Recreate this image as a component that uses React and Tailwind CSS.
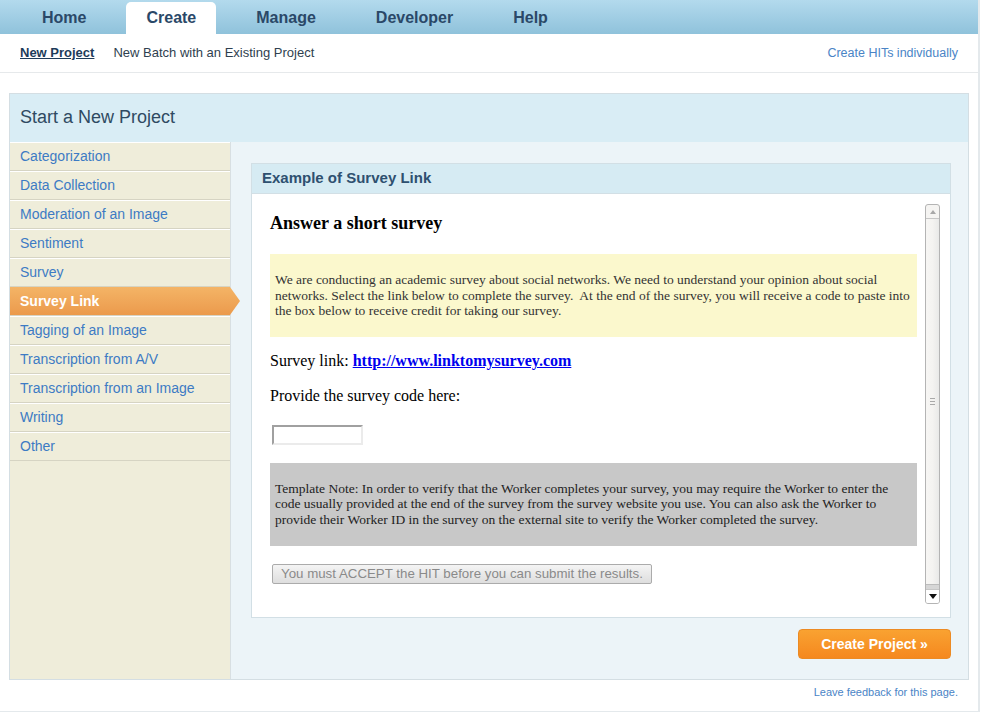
const tabs = ['Home', 'Create', 'Manage', 'Developer', 'Help'];

const categories = [
  'Categorization',
  'Data Collection',
  'Moderation of an Image',
  'Sentiment',
  'Survey',
  'Survey Link',
  'Tagging of an Image',
  'Transcription from A/V',
  'Transcription from an Image',
  'Writing',
  'Other',
];

function TopNav() {
  return (
    <div className="h-[34px] flex items-end pl-[22px] gap-[20px] bg-gradient-to-b from-[#b3daed] to-[#8fc2db]">
      {tabs.map((t) =>
        t === 'Create' ? (
          <div
            key={t}
            className="h-[32px] px-[20px] flex items-center bg-white rounded-t-[5px] text-[16px] font-bold text-[#2a4868]"
          >
            {t}
          </div>
        ) : (
          <div key={t} className="h-[32px] px-[20px] flex items-center text-[16px] font-bold text-[#2a4868]">
            {t}
          </div>
        )
      )}
    </div>
  );
}

function SubNav() {
  return (
    <div className="h-[39px] flex items-center justify-between px-[20px] border-b border-[#e6e9eb]">
      <div className="flex items-center gap-[19px] text-[13px]">
        <span className="font-bold underline text-[#1d3c5a]">New Project</span>
        <span className="text-[#2f3f4f]">New Batch with an Existing Project</span>
      </div>
      <span className="text-[12.5px] text-[#4a84c6]">Create HITs individually</span>
    </div>
  );
}

function Sidebar() {
  return (
    <div className="w-[221px] shrink-0 bg-[#efedda] border-r border-[#d8dfe2] flex flex-col">
      {categories.map((c) =>
        c === 'Survey Link' ? (
          <div key={c} className="relative h-[29px] border-b border-[#d6d4c3]">
            <div className="h-full flex items-center pl-[10px] text-[14px] font-bold text-white bg-gradient-to-b from-[#f4b466] to-[#eb9a4c]">
              {c}
            </div>
            <span className="absolute right-[-10px] top-0 w-[10px] h-[28px] bg-gradient-to-b from-[#f4b466] to-[#eb9a4c] [clip-path:polygon(0_0,100%_50%,0_100%)]" />
          </div>
        ) : (
          <div
            key={c}
            className="h-[29px] flex items-center pl-[10px] text-[14px] text-[#3d7bc4] border-b border-[#d6d4c3] shadow-[inset_0_1px_0_#ffffff]"
          >
            {c}
          </div>
        )
      )}
    </div>
  );
}

function Scrollbar() {
  return (
    <div className="w-[15px] h-[400px] shrink-0 border border-[#b4b4b4] rounded-[3px] flex flex-col bg-[#f5f4f2] overflow-hidden">
      <div className="h-[14px] flex items-center justify-center border-b border-[#c6c6c6]">
        <span className="w-0 h-0 border-l-[3px] border-r-[3px] border-b-[4px] border-l-transparent border-r-transparent border-b-[#a8a8a8]" />
      </div>
      <div className="flex-1 flex items-center justify-center bg-gradient-to-r from-[#f7f6f4] via-[#f4f3f1] to-[#e9e9e8]">
        <div className="flex flex-col gap-[2px]">
          <span className="block w-[5px] h-px bg-[#a9a9a9]" />
          <span className="block w-[5px] h-px bg-[#a9a9a9]" />
          <span className="block w-[5px] h-px bg-[#a9a9a9]" />
        </div>
      </div>
      <div className="h-[5px] bg-[#d6d6d6] border-t border-[#bcbcbc]" />
      <div className="h-[14px] flex items-center justify-center border-t border-[#c6c6c6] bg-white">
        <span className="w-0 h-0 border-l-[4px] border-r-[4px] border-t-[5px] border-l-transparent border-r-transparent border-t-[#111111]" />
      </div>
    </div>
  );
}

function SurveyFrame() {
  return (
    <div className="h-[400px] flex">
      <div className="w-[663px] h-[400px] overflow-hidden p-[8px] font-['Liberation_Serif',serif] text-black">
        <h3 className="mt-[1px] text-[18px] leading-[21px] font-bold mb-[20px]">Answer a short survey</h3>
        <div className="bg-[#fbf8cd] py-[18px] px-[5px] text-[13.5px] leading-[15.6px] text-[#333333] whitespace-nowrap">
          We are conducting an academic survey about social networks. We need to understand your opinion about social
          <br />
          networks. Select the link below to complete the survey.&nbsp; At the end of the survey, you will receive a code
          to paste into
          <br />
          the box below to receive credit for taking our survey.
        </div>
        <p className="mt-[15px] text-[16px] leading-[18px]">
          Survey link:{' '}
          <a className="font-bold underline text-[#0000ee]" href="#">
            http://www.linktomysurvey.com
          </a>
        </p>
        <p className="mt-[17px] text-[16px] leading-[18px]">Provide the survey code here:</p>
        <div className="mt-[20px] ml-[2px] w-[91px] h-[20px] border-2 border-t-[#a0a0a0] border-l-[#a0a0a0] border-b-[#ebebeb] border-r-[#ebebeb] bg-white" />
        <div className="mt-[18px] bg-[#c8c8c8] py-[18px] px-[5px] text-[13.5px] leading-[15.6px] text-[#222222] whitespace-nowrap">
          Template Note: In order to verify that the Worker completes your survey, you may require the Worker to enter
          the
          <br />
          code usually provided at the end of the survey from the survey website you use. You can also ask the Worker
          to
          <br />
          provide their Worker ID in the survey on the external site to verify the Worker completed the survey.
        </div>
        <div className="mt-[18px] ml-[2px] inline-flex h-[20px] items-center px-[8px] border border-[#ababab] rounded-[2px] bg-gradient-to-b from-[#f4f4f4] to-[#dedede] text-[13.3px] text-[#8a8a8a] font-['Liberation_Sans',sans-serif]">
          You must ACCEPT the HIT before you can submit the results.
        </div>
      </div>
      <Scrollbar />
    </div>
  );
}

export default function App() {
  return (
    <div className="w-[983px] h-[713px] bg-white font-['Liberation_Sans',Arial,sans-serif] overflow-hidden">
      <div className="w-[980px] h-[712px] border-r-2 border-b border-[#e4e9ec] flex flex-col">
        <TopNav />
        <SubNav />
        <div className="mt-[20px] mx-[9px] border border-[#d4dee3] flex flex-col">
          <div className="h-[48px] flex items-center pl-[10px] pb-[2px] bg-[#d9edf5] text-[18px] text-[#2f4a62]">
            Start a New Project
          </div>
          <div className="h-[537px] flex">
            <Sidebar />
            <div className="flex-1 bg-[#ecf4f8] pt-[21px] pl-[20px] pr-[17px] flex flex-col">
              <div className="border border-[#d2dfe5] bg-white flex flex-col">
                <div className="h-[30px] flex items-center pl-[10px] bg-[#d6ebf3] border-b border-[#d2dfe5] text-[15px] font-bold text-[#2e5070]">
                  Example of Survey Link
                </div>
                <div className="pt-[10px] pl-[10px] pr-[9px] pb-[13px]">
                  <SurveyFrame />
                </div>
              </div>
              <div className="mt-[11px] flex justify-end">
                <button className="w-[153px] h-[30px] rounded-[4px] border border-[#ec8a23] bg-gradient-to-b from-[#f9a231] to-[#f5881e] text-white text-[14px] font-bold">
                  Create Project »
                </button>
              </div>
            </div>
          </div>
        </div>
        <div className="mt-[4px] pr-[20px] text-right text-[11px] text-[#4a84c6]">Leave feedback for this page.</div>
      </div>
    </div>
  );
}
